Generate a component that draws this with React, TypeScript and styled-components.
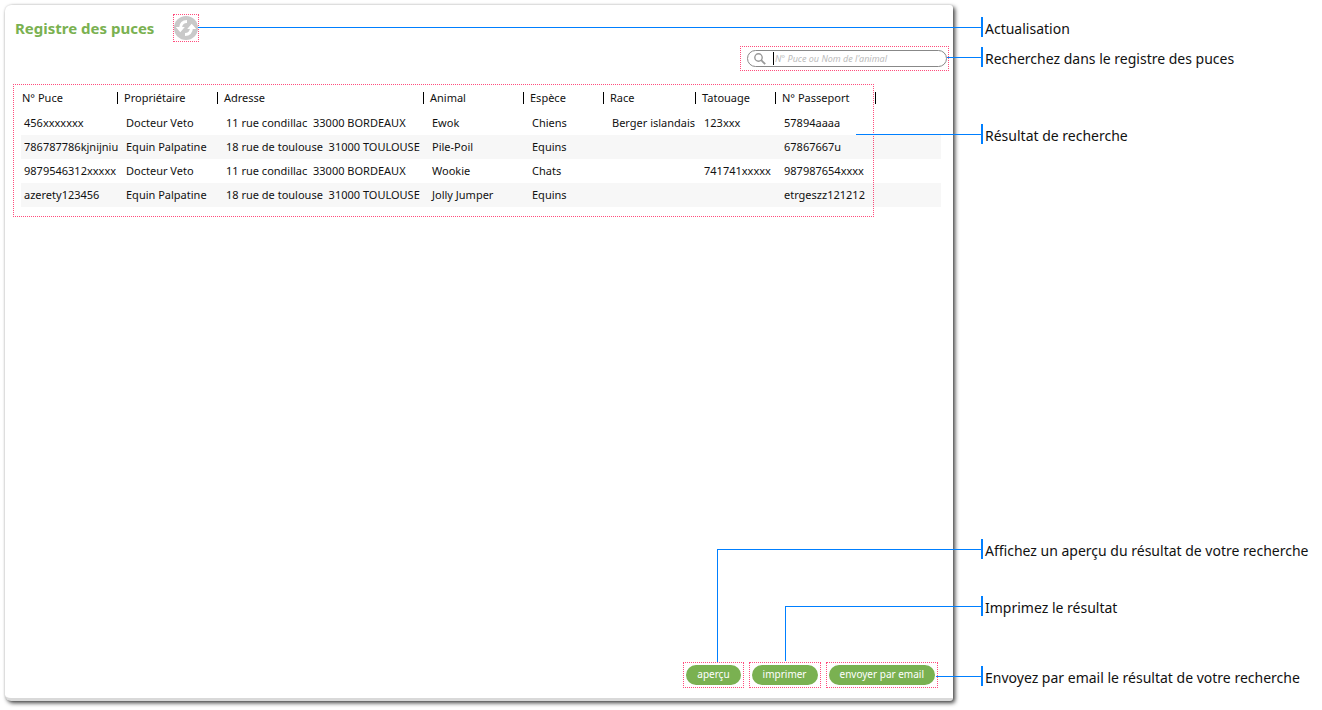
import React from "react";
import styled, { createGlobalStyle } from "styled-components";

const GlobalStyle = createGlobalStyle`
  *, *::before, *::after { box-sizing: border-box; }
  body {
    margin: 0;
    background: #fff;
    color: #111;
    font-family: "Noto Sans", "Open Sans", sans-serif;
    font-size: 11px;
  }
`;

const blue = "#007fff";
const pink = "#ff4d7d";
const green = "#7ab151";

const Page = styled.div`
  position: relative;
  display: flex;
  min-height: 100vh;
  padding: 5px 0 9px 5px;
`;

const Panel = styled.main`
  flex: 1;
  min-width: 0;
  display: flex;
  flex-direction: column;
  padding: 9px 4px 10px 8px;
  border-bottom: 3px solid #d9d9d9;
  border-radius: 6px 3px 3px 6px;
  background: #fff;
  box-shadow: 2px 2px 4px rgba(0, 0, 0, 0.75), 0 0 2px rgba(0, 0, 0, 0.15);
`;

const Header = styled.header`
  display: flex;
  align-items: center;
  gap: 18px;
  height: 28px;
  padding-left: 2px;
`;

const Title = styled.h1`
  width: 140px;
  margin: 0;
  color: ${green};
  font-size: 15px;
  line-height: 24px;
  white-space: nowrap;
`;

const Highlight = styled.div`
  display: flex;
  padding: 2px;
  border: 1px dotted ${pink};
`;

const SearchHighlight = styled(Highlight)`
  padding: 3px 1px 3px 6px;
`;

const RefreshButton = styled.button`
  display: flex;
  padding: 1px 0;
  border: 1px dotted ${pink};
  background: none;
  cursor: pointer;
`;

const SearchArea = styled.div`
  display: flex;
  justify-content: flex-end;
  margin-top: 4px;
`;

const SearchBox = styled.label`
  display: flex;
  align-items: center;
  gap: 7px;
  width: 200px;
  height: 17px;
  padding: 0 6px;
  border: 1px solid #888;
  border-radius: 9px;
`;

const SearchInput = styled.input`
  flex: 1;
  min-width: 0;
  height: 13px;
  padding: 0 0 0 1px;
  border: 0;
  border-left: 1px solid #000;
  outline: 0;
  background: none;
  color: #111;
  font: inherit;
  font-size: 9px;
  &::placeholder { color: #bbb; font-style: italic; opacity: 1; }
`;

const Results = styled.div`
  width: 861px;
  height: 133px;
  margin-top: 13px;
  padding-left: 7px;
  border: 1px dotted ${pink};
`;

const Table = styled.table`
  width: 920px;
  table-layout: fixed;
  border-collapse: collapse;
  white-space: pre;
`;

const HeadCell = styled.th<{ $w?: number }>`
  width: ${(p) => (p.$w ? `${p.$w}px` : "auto")};
  height: 26px;
  padding: 7px 0;
  font-size: 11px;
  font-weight: 400;
  text-align: left;
`;

const HeadLabel = styled.span`
  display: block;
  padding-left: 6px;
  line-height: 12px;
  border-right: 1px solid #000;
  ${HeadCell}:first-child & { padding-left: 1px; }
`;

const Row = styled.tr`
  height: 24px;
  &:nth-child(even) { background: rgba(0, 0, 0, 0.03); }
`;

const Cell = styled.td`
  padding: 0 0 0 8px;
  line-height: 16px;
  &:first-child { padding-left: 3px; }
`;

const Actions = styled.footer`
  display: flex;
  justify-content: flex-end;
  gap: 5px;
  margin-top: auto;
  padding-right: 11px;
`;

const ActionButton = styled.button`
  height: 20px;
  padding: 0 11px 2px;
  border: 0;
  border-radius: 10px;
  background: ${green};
  color: #fff;
  font: inherit;
  font-size: 10px;
  line-height: 18px;
  white-space: nowrap;
  cursor: pointer;
`;

const Notes = styled.aside`
  display: flex;
  flex-direction: column;
  justify-content: space-between;
  width: 341px;
  margin-left: 28px;
  padding: 12px 0 15px;
`;

const NoteGroup = styled.div`
  display: flex;
  flex-direction: column;
`;

const Note = styled.p<{ $gap?: number }>`
  height: 20px;
  margin: ${(p) => p.$gap ?? 0}px 0 0;
  padding: 2px 0 0 2px;
  border-left: 2px solid ${blue};
  font-size: 14px;
  line-height: 20px;
  white-space: nowrap;
`;

/* Leader lines run over the panel, from each control to its note. */
const Leader = styled.i<{ $top?: number; $bottom?: number; $left?: number; $width?: number; $drop?: number }>`
  position: absolute;
  right: 341px;
  ${(p) => p.$top !== undefined && `top: ${p.$top}px;`}
  ${(p) => p.$bottom !== undefined && `bottom: ${p.$bottom}px;`}
  ${(p) => p.$left !== undefined && `left: ${p.$left}px;`}
  ${(p) => p.$width !== undefined && `width: ${p.$width}px;`}
  height: ${(p) => p.$drop ?? 1}px;
  border-top: 1px solid ${blue};
  border-left: ${(p) => (p.$drop ? `1px solid ${blue}` : "0")};
  pointer-events: none;
`;

const columns: [string, number][] = [
  ["N° Puce", 97],
  ["Propriétaire", 100],
  ["Adresse", 206],
  ["Animal", 100],
  ["Espèce", 80],
  ["Race", 92],
  ["Tatouage", 80],
  ["N° Passeport", 100],
];

const rows = [
  ["456xxxxxxx", "Docteur Veto", "11 rue condillac  33000 BORDEAUX", "Ewok", "Chiens", "Berger islandais", "123xxx", "57894aaaa"],
  ["786787786kjnijniu", "Equin Palpatine", "18 rue de toulouse  31000 TOULOUSE", "Pile-Poil", "Equins", "", "", "67867667u"],
  ["9879546312xxxxx", "Docteur Veto", "11 rue condillac  33000 BORDEAUX", "Wookie", "Chats", "", "741741xxxxx", "987987654xxxx"],
  ["azerety123456", "Equin Palpatine", "18 rue de toulouse  31000 TOULOUSE", "Jolly Jumper", "Equins", "", "", "etrgeszz121212"],
];

const RefreshIcon = () => (
  <svg width="24" height="24" viewBox="0 0 24 24" aria-hidden="true">
    <circle cx="12" cy="12" r="12" fill="#c9c9c9" />
    <g fill="none" stroke="#fff" strokeWidth="3">
      <path d="M13 5.500C9 5.500 6.800 8 6.500 12" />
      <path d="M11 18.500C15 18.500 17.200 16 17.500 12" />
    </g>
    <path d="M1.800 11H10.800L6.300 16.300ZM13.200 13H22.200L17.700 7.700Z" fill="#fff" />
  </svg>
);

const SearchIcon = () => (
  <svg width="12" height="12" viewBox="0 0 12 12" fill="none" stroke="#999" aria-hidden="true">
    <circle cx="4.500" cy="4.500" r="3.700" strokeWidth="1.400" />
    <path d="M7.200 7.200L11.200 11.200" strokeWidth="1.800" />
  </svg>
);

export default function App() {
  return (
    <>
      <GlobalStyle />
      <Page>
        <Panel>
          <Header>
            <Title>Registre des puces</Title>
            <RefreshButton type="button" aria-label="Actualisation">
              <RefreshIcon />
            </RefreshButton>
          </Header>
          <SearchArea>
            <SearchHighlight>
              <SearchBox>
                <SearchIcon />
                <SearchInput type="text" aria-label="Recherche" placeholder="N° Puce ou Nom de l'animal" />
              </SearchBox>
            </SearchHighlight>
          </SearchArea>
          <Results>
            <Table>
              <thead>
                <tr>
                  {columns.map(([label, w]) => (
                    <HeadCell key={label} $w={w} scope="col">
                      <HeadLabel>{label}</HeadLabel>
                    </HeadCell>
                  ))}
                  <HeadCell as="td" />
                </tr>
              </thead>
              <tbody>
                {rows.map((row) => (
                  <Row key={row[0]}>
                    {row.map((value, i) => (
                      <Cell key={i}>{value}</Cell>
                    ))}
                    <Cell />
                  </Row>
                ))}
              </tbody>
            </Table>
          </Results>
          <Actions>
            <Highlight><ActionButton type="button">aperçu</ActionButton></Highlight>
            <Highlight><ActionButton type="button">imprimer</ActionButton></Highlight>
            <Highlight><ActionButton type="button">envoyer par email</ActionButton></Highlight>
          </Actions>
        </Panel>
        <Notes>
          <NoteGroup>
            <Note>Actualisation</Note>
            <Note $gap={10}>Recherchez dans le registre des puces</Note>
            <Note $gap={57}>Résultat de recherche</Note>
          </NoteGroup>
          <NoteGroup>
            <Note>Affichez un aperçu du résultat de votre recherche</Note>
            <Note $gap={37}>Imprimez le résultat</Note>
            <Note $gap={50}>Envoyez par email le résultat de votre recherche</Note>
          </NoteGroup>
        </Notes>
        <Leader $top={27} $left={198} />
        <Leader $top={57} $width={34} />
        <Leader $top={134} $width={125} />
        <Leader $bottom={48} $width={264} $drop={113} />
        <Leader $bottom={49} $width={196} $drop={55} />
        <Leader $bottom={33} $width={45} />
      </Page>
    </>
  );
}
